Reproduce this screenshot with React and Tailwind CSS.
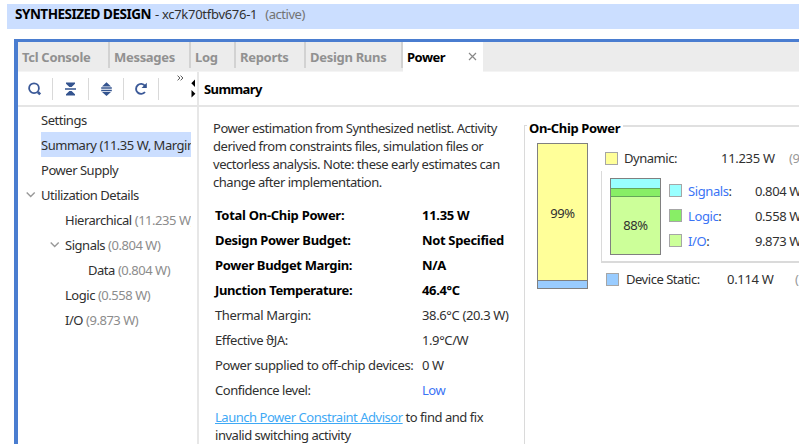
import React from 'react';

const tree = [
  { label: 'Settings', pad: 'pl-[23px]' },
  { label: 'Summary', value: '(11.35 W, Margin: N/A)', pad: 'pl-[23px]', selected: true },
  { label: 'Power Supply', pad: 'pl-[23px]' },
  { label: 'Utilization Details', pad: 'pl-[7px]', open: true },
  { label: 'Hierarchical', value: '(11.235 W)', pad: 'pl-[47px]' },
  { label: 'Signals', value: '(0.804 W)', pad: 'pl-[31px]', open: true },
  { label: 'Data', value: '(0.804 W)', pad: 'pl-[70px]' },
  { label: 'Logic', value: '(0.558 W)', pad: 'pl-[47px]' },
  { label: 'I/O', value: '(9.873 W)', pad: 'pl-[47px]' },
];

const metrics = [
  { label: 'Total On-Chip Power:', value: '11.35 W', style: 'font-bold text-black tracking-[-0.28px]' },
  { label: 'Design Power Budget:', value: 'Not Specified', style: 'font-bold text-black tracking-[-0.34px]' },
  { label: 'Power Budget Margin:', value: 'N/A', style: 'font-bold text-black tracking-[-0.36px]' },
  { label: 'Junction Temperature:', value: '46.4°C', style: 'font-bold text-black tracking-[-0.36px]' },
  { label: 'Thermal Margin:', value: '38.6°C (20.3 W)', style: 'tracking-[-0.36px]' },
  { label: 'Effective ϑJA:', value: '1.9°C/W', style: 'tracking-[-0.4px]' },
  { label: 'Power supplied to off-chip devices:', value: '0 W', style: 'tracking-[-0.38px]' },
  { label: 'Confidence level:', value: 'Low', style: '', valueStyle: 'text-[#3b74f5]' },
];

const tabs = [
  { label: 'Tcl Console', width: 'w-[92px]' },
  { label: 'Messages', width: 'w-[81px]' },
  { label: 'Log', width: 'w-[45px]' },
  { label: 'Reports', width: 'w-[70px]' },
  { label: 'Design Runs', width: 'w-[97px]' },
];

const signals = [
  { label: 'Signals', value: '0.804 W', color: 'bg-[#99ffff]' },
  { label: 'Logic', value: '0.558 W', color: 'bg-[#88ee66]' },
  { label: 'I/O', value: '9.873 W', color: 'bg-[#ccff99]' },
];

function Chevron() {
  return (
    <svg className="mr-[5px] shrink-0" width="11" height="10" viewBox="0 0 11 10" fill="none" stroke="#999" strokeWidth="1.4">
      <path d="M1.7 2.6 5.7 6.6 9.7 2.6" />
    </svg>
  );
}

function Swatch({ color }) {
  return <span className={`size-[13px] shrink-0 border border-[#a6a6a6] ${color}`} />;
}

function Toolbar() {
  const sep = 'h-[22px] w-px shrink-0 bg-[#d9d9d9]';
  return (
    <div className="flex h-[33px] w-[179px] items-center overflow-hidden">
      <svg className="ml-[9px] mr-[9px] shrink-0" width="16" height="16" viewBox="0 0 16 16" fill="none" stroke="#3b5998" strokeWidth="1.8">
        <circle cx="7" cy="7.2" r="4.9" />
        <path d="M10.8 11 13.2 13.4" strokeWidth="2.6" />
      </svg>
      <span className={sep} />
      <svg className="mx-[10px] shrink-0" width="15" height="16" viewBox="0 0 15 16" fill="#34548f">
        <path d="M3 1.6h9v1.2L8.6 5.9H6.4L3 2.8zM2 7.2h11v1.6H2zM6.4 10.1h2.2l3.4 3.1v1.2H3v-1.2z" />
      </svg>
      <span className={sep} />
      <svg className="ml-[10px] mr-[9px] shrink-0" width="15" height="16" viewBox="0 0 15 16" fill="#34548f">
        <path d="M7.5 1.2 12 5.4H3zM2.2 6.2h10.6v1.5H2.2zM2.2 8.7h10.6v1.5H2.2zM3 11h9l-4.5 4z" />
      </svg>
      <span className={sep} />
      <svg className="ml-[9px] mr-[10px] shrink-0" width="15" height="16" viewBox="0 0 15 16" fill="none" stroke="#3b5998" strokeWidth="1.9">
        <path d="M12 4.8A5 5 0 1 0 12 11" />
        <path d="M13.8 1.8V7H8.6z" fill="#34548f" stroke="none" />
      </svg>
      <span className={sep} />
      <svg className="mb-[21px] ml-[18px] shrink-0" width="7" height="6" viewBox="0 0 7 6" fill="none" stroke="#444" strokeWidth="0.9">
        <path d="M.6.6 2.9 3 .6 5.4M3.6.6 5.9 3 3.6 5.4" />
      </svg>
      <svg className="ml-[7px] shrink-0" width="5" height="20" viewBox="0 0 5 20" fill="#000">
        <path d="M4 .5V8L.3 4.2zM.5 11 4.4 14.8.5 18.5z" />
      </svg>
    </div>
  );
}

export default function App() {
  return (
    <div className="h-[444px] w-[799px] overflow-hidden whitespace-nowrap bg-white font-['Noto_Sans','Open_Sans',sans-serif] text-[13px] tracking-[-0.47px] text-[#303030]">
      <header className="ml-[7px] mt-1 flex h-[25px] items-center bg-[#cbdeff] pb-[4px] pl-2">
        <span className="text-[13.5px] font-bold tracking-[-0.5px] text-black">SYNTHESIZED DESIGN</span>
        <span className="ml-1 tracking-[-0.28px]">- xc7k70tfbv676-1</span>
        <span className="ml-2 text-[#737373]">(active)</span>
      </header>

      <main className="ml-[14px] mt-[10px] h-[405px] border-l-4 border-t-[3px] border-[#4a7dd0]">
        <nav className="flex h-[30px] border-b border-[#f4f4f4] bg-[#ececec] font-bold tracking-[-0.3px] text-[#919191]">
          {tabs.map((tab) => (
            <div key={tab.label} className={`flex h-[26px] items-center border-r-2 border-[#d2d2d2] pl-1 pt-[6px] ${tab.width}`}>
              {tab.label}
            </div>
          ))}
          <div className="flex h-[30px] w-[80px] items-center bg-white pl-1 pt-0.5 tracking-[-0.5px] text-black">
            Power
            <svg className="mb-[3px] ml-auto mr-[6px]" width="9" height="9" viewBox="0 0 9 9" stroke="#888" strokeWidth="1.2">
              <path d="M1 1l7 7M8 1 1 8" />
            </svg>
          </div>
        </nav>

        <div className="flex h-[35px] border-b-2 border-[#e5e5e5]">
          <Toolbar />
          <div className="flex flex-1 items-center border-l-2 border-[#e7e7e7] pl-[5px] pt-[3px] font-bold tracking-[-0.6px] text-black">Summary</div>
        </div>

        <div className="flex h-[337px]">
          <aside className="w-[179px] shrink-0 pr-[6px]">
            {tree.map((row) => (
              <div key={row.label} className={`flex h-[25px] items-center overflow-hidden ${row.pad}`}>
                {row.open && <Chevron />}
                <div className={`flex h-[25px] min-w-0 flex-1 items-center gap-[3px] overflow-hidden pt-0.5 ${row.selected ? 'bg-[#cbdeff]' : ''}`}>
                  <span>{row.label}</span>
                  {row.value && <span className={row.selected ? '' : 'text-[#8c8c8c]'}>{row.value}</span>}
                </div>
              </div>
            ))}
          </aside>

          <section className="w-[327px] shrink-0 border-l-2 border-[#e7e7e7] pl-[14px] pt-3">
            <p className="leading-[18px]">
              Power estimation from Synthesized netlist. Activity<br />
              derived from constraints files, simulation files or<br />
              vectorless analysis. Note: these early estimates can<br />
              change after implementation.
            </p>
            <div className="ml-0.5 mt-3">
              {metrics.map((m) => (
                <div key={m.label} className={`flex h-[25px] items-center ${m.style}`}>
                  <span className="w-[207px] shrink-0">{m.label}</span>
                  <span className={m.valueStyle || ''}>{m.value}</span>
                </div>
              ))}
              <p className="mt-[5px] leading-[18px]">
                <span className="text-[#3fa9f5] underline">Launch Power Constraint Advisor</span> to find and fix<br />
                invalid switching activity
              </p>
            </div>
          </section>

          <section className="flex min-w-0 flex-1 flex-col pt-3">
            <div className="flex h-[18px] shrink-0 items-center">
              <span className="mt-1.5 h-3 w-[3px] shrink-0 border-l border-t border-[#dadada]" />
              <h2 className="ml-[2px] mt-0.5 font-bold tracking-[-0.36px] text-black">On-Chip Power</h2>
              <span className="mb-[5px] ml-[3px] h-0.5 flex-1 bg-[#e0e0e0]" />
            </div>
            <div className="flex flex-1 border-l border-[#dadada] pl-3 pt-1.5">
              <div className="flex h-[146px] w-[51px] shrink-0 flex-col border border-[#808080] text-center">
                <div className="flex flex-1 items-center justify-center bg-[#ffff99] pt-[3px]">99%</div>
                <div className="h-2 border-t border-[#808080] bg-[#99ccff]" />
              </div>
              <div className="ml-[13px] flex min-w-0 flex-1 flex-col">
                <div className="flex h-[28px] items-center pl-1 pt-[3px]">
                  <Swatch color="bg-[#ffff99]" />
                  <span className="ml-[6px] w-[97px] shrink-0 pt-px">Dynamic:</span>
                  <span className="pt-px tracking-[-0.3px]">11.235 W</span>
                  <span className="ml-auto w-[10px] overflow-hidden text-[#999]">(99%)</span>
                </div>
                <div className="flex h-[92px] border-b-2 border-l border-[#dadada] pl-2 pt-[7px]">
                  <div className="flex h-[77px] w-[51px] shrink-0 flex-col border border-[#808080]">
                    <div className="h-[9px] bg-[#99ffff]" />
                    <div className="h-[9px] border-y border-[#65a65a] bg-[#88ee66]" />
                    <div className="flex flex-1 items-center justify-center bg-[#ccff99]">88%</div>
                  </div>
                  <div className="ml-2 flex min-w-0 flex-1 flex-col">
                    {signals.map((s) => (
                      <div key={s.label} className="flex h-[25px] items-center overflow-hidden">
                        <Swatch color={s.color} />
                        <span className="ml-[6px] w-[67px] shrink-0 pt-0.5 tracking-[-0.4px]"><span className="text-[#3b74f5]">{s.label}</span>:</span>
                        <span className="shrink-0 pt-0.5 tracking-[-0.4px]">{s.value}</span>
                      </div>
                    ))}
                  </div>
                </div>
                <div className="flex h-[33px] items-center pl-[5px]">
                  <Swatch color="bg-[#99ccff]" />
                  <span className="ml-[7px] w-[101px] shrink-0 pt-px">Device Static:</span>
                  <span className="pt-px tracking-[-0.3px]">0.114 W</span>
                  <span className="ml-auto w-1 overflow-hidden text-[#999]">(1%)</span>
                </div>
              </div>
            </div>
          </section>
        </div>
      </main>
    </div>
  );
}
